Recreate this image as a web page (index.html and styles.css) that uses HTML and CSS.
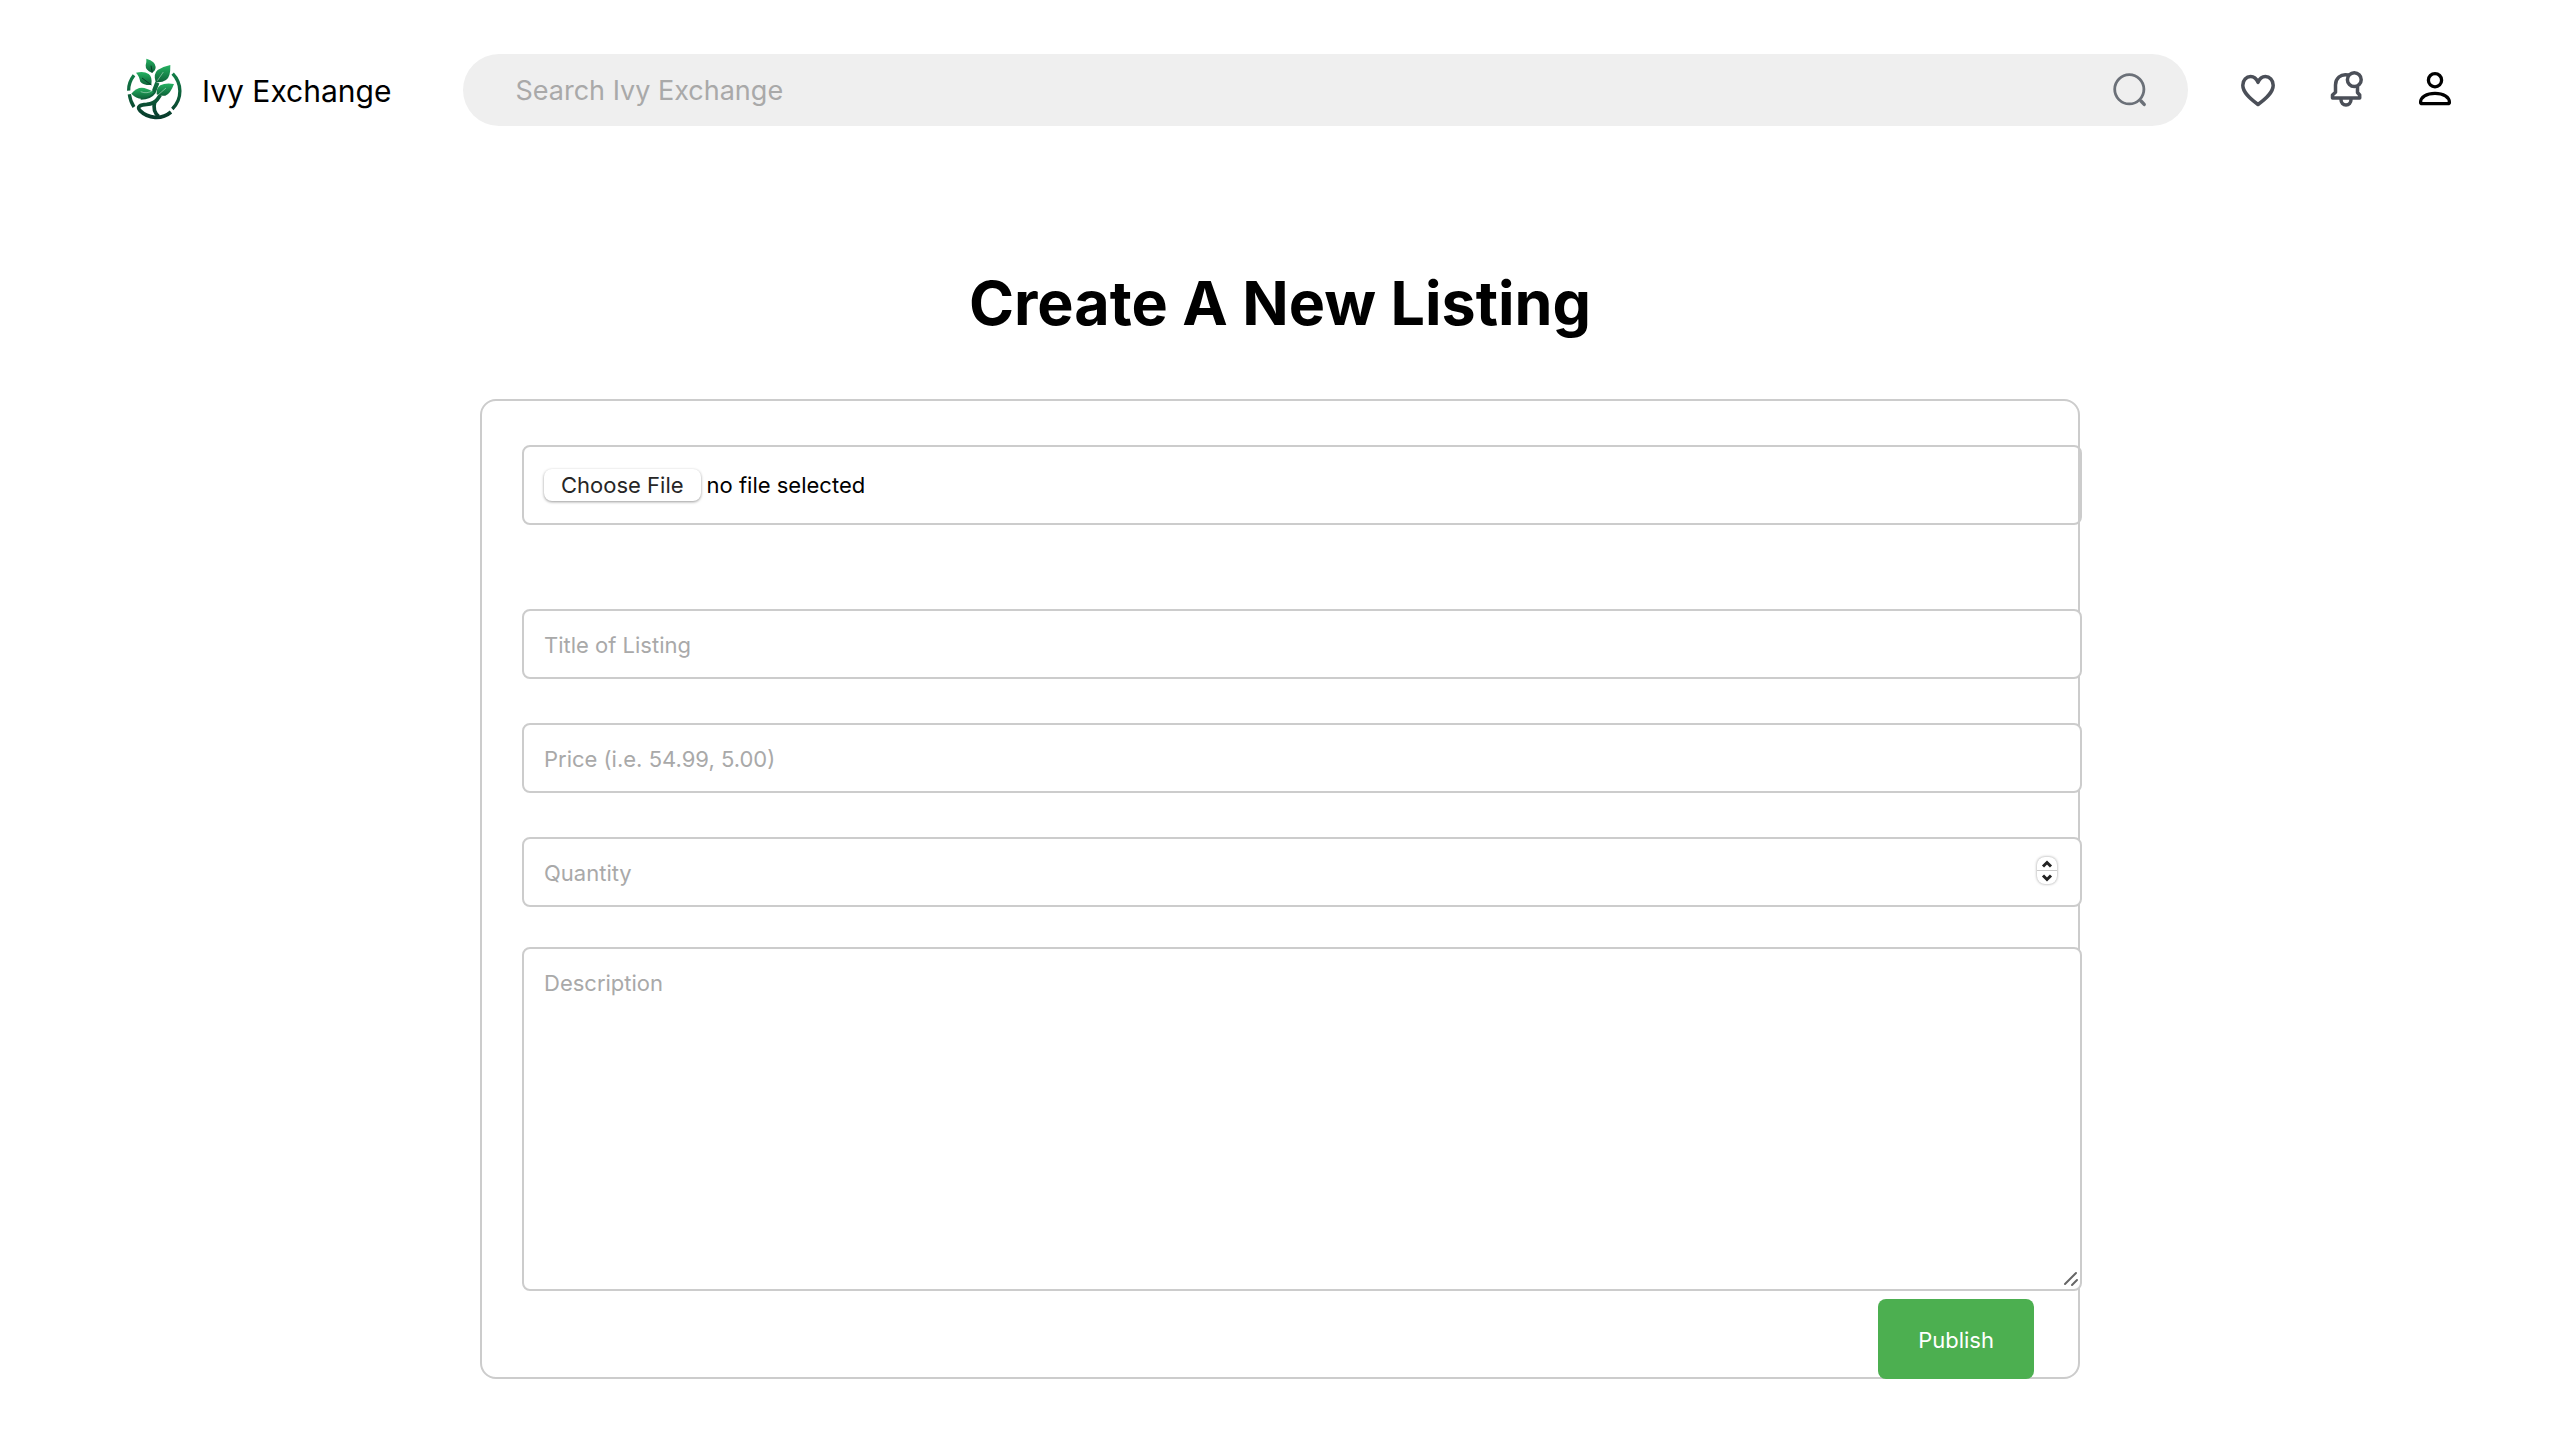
FILE: index.html
```html
<!DOCTYPE html>
<html lang="en">
<head>
  <meta charset="utf-8">
  <meta name="viewport" content="width=device-width, initial-scale=1">
  <title>Create A New Listing - Ivy Exchange</title>
  <link rel="stylesheet" href="styles.css">
</head>
<body>
  <header class="topbar">
    <a class="brand" href="#">
      <svg class="brand-logo" viewBox="0 0 210 225" aria-hidden="true">
        <defs>
          <linearGradient id="leaf" x1="0" y1="0" x2="0" y2="1">
            <stop offset="0" stop-color="#25b362"/>
            <stop offset="1" stop-color="#0d6238"/>
          </linearGradient>
          <linearGradient id="ring" gradientUnits="userSpaceOnUse" x1="0" y1="60" x2="0" y2="205">
            <stop offset="0" stop-color="#128048"/>
            <stop offset="1" stop-color="#08372a"/>
          </linearGradient>
        </defs>
        <g fill="none" stroke="url(#ring)" stroke-width="10">
          <path d="M42 70Q25 92 26 116"/>
          <path d="M28 127Q31 149 42 165"/>
          <path d="M158 65C186 94 188 140 157 171"/>
          <path d="M153 180C125 204 84 200 60 176C50 164 60 158 80 157Q103 155 112 142L121 129" stroke-width="11"/>
          <path d="M104 150Q97 178 116 193" stroke-width="11"/>
          <path d="M62 137Q90 136 101 120L112 92" stroke-width="13"/>
        </g>
        <g fill="url(#leaf)">
          <path d="M79 20Q107 28 107 45Q107 57 95 62Q76 55 77 40Q80 30 79 20Z"/>
          <path d="M48 62Q72 56 86 66Q98 75 94 99Q70 100 61 89Q57 71 48 62Z"/>
          <path d="M151 39Q152 76 138 84Q124 93 107 90Q99 66 113 54Q129 43 151 39Z"/>
          <path d="M34 125Q53 103 73 108Q88 112 102 120Q88 136 70 140Q51 143 34 125Z"/>
          <path d="M162 96Q151 126 136 131Q121 133 110 127Q108 109 121 100Q136 92 162 96Z"/>
        </g>
        <path d="M62 119Q82 127 98 115M138 108L114 129M130 60L112 86" fill="none" stroke="#d8efe0" stroke-width="1.500"/>
        <path d="M93 41L97 62M66 78L94 99" fill="none" stroke="#083c29" stroke-width="3"/>
      </svg>
      <span>Ivy Exchange</span>
    </a>

    <form class="search" role="search">
      <input class="search-input" type="search" placeholder="Search Ivy Exchange" aria-label="Search Ivy Exchange">
      <button class="icon-button" type="submit" aria-label="Search">
        <svg class="icon" viewBox="0 0 40 40" fill="none" stroke="#6b7078" stroke-width="2.800">
          <circle cx="17.300" cy="19.300" r="14.600"/>
          <path d="M29 31l3.200 3.400" stroke-width="3.400" stroke-linecap="round"/>
        </svg>
      </button>
    </form>

    <nav class="actions" aria-label="Account">
      <a class="action" href="#" aria-label="Favorites">
        <svg class="icon" viewBox="1 0 40 40" fill="none" stroke="#4b4f58" stroke-width="3.500" stroke-linejoin="round">
          <path d="M20 34.500C12 28.500 4.800 22.500 4.800 15.200C4.800 10 8.400 6.600 12.600 6.600C16 6.600 18.600 9 20 12.400C21.400 9 24 6.600 27.400 6.600C31.600 6.600 35.200 10 35.200 15.200C35.200 22.500 28 28.500 20 34.500Z"/>
        </svg>
      </a>
      <a class="action" href="#" aria-label="Notifications">
        <svg class="icon" viewBox="0 0 40 40" fill="none" stroke="#4b4f58" stroke-width="3.500" stroke-linejoin="round" stroke-linecap="round">
          <path d="M21 5C13.500 3.500 8.500 8.500 8.500 15V22.300L5.500 25V28H32.700V25L30.500 22.500V17"/>
          <circle cx="27.300" cy="9.700" r="6.900"/>
          <path d="M14 29.500C14 33 16.200 35 19 35S24 33 24 29.500"/>
        </svg>
      </a>
      <a class="action" href="#" aria-label="Profile">
        <svg class="icon" viewBox="0 0 40 40" fill="none" stroke="#000" stroke-width="3.300" stroke-linejoin="round">
          <circle cx="20" cy="10.200" r="6.600"/>
          <path d="M7.200 33.700C6.200 33.700 5.600 33 5.600 32.200C5.600 27 11.500 23.300 20 23.300S34.400 27 34.400 32.200C34.400 33 33.800 33.700 32.800 33.700Z"/>
        </svg>
      </a>
    </nav>
  </header>

  <main class="page">
    <h1 class="page-title">Create A New Listing</h1>

    <form class="listing-form">
      <div class="field file-field">
        <input class="visually-hidden" type="file" id="listing-photo">
        <label class="file-button" for="listing-photo">Choose File</label>
        <span class="file-name">no file selected</span>
      </div>

      <input class="field" type="text" placeholder="Title of Listing" aria-label="Title of Listing">
      <input class="field" type="text" placeholder="Price (i.e. 54.99, 5.00)" aria-label="Price">

      <div class="control">
        <input class="field" type="number" placeholder="Quantity" aria-label="Quantity">
        <div class="stepper">
          <button class="step" type="button" aria-label="Increase quantity">
            <svg viewBox="0 0 20 13" fill="none" stroke="#222" stroke-width="3"><path d="M6 9.500L10 5.500L14 9.500"/></svg>
          </button>
          <button class="step" type="button" aria-label="Decrease quantity">
            <svg viewBox="0 0 20 13" fill="none" stroke="#222" stroke-width="3"><path d="M6 4.500L10 8.500L14 4.500"/></svg>
          </button>
        </div>
      </div>

      <div class="control">
        <textarea class="field description" placeholder="Description" aria-label="Description"></textarea>
        <svg class="grip" viewBox="0 0 16 16" fill="none" stroke="#666" stroke-width="2" stroke-linecap="round" aria-hidden="true">
          <path d="M2 13L13 2M9 14L14 9"/>
        </svg>
      </div>

      <button class="publish" type="submit">Publish</button>
    </form>
  </main>
</body>
</html>
```
FILE: styles.css
```css
body {
  margin: 0;
  background: #fff;
  color: #000;
  font-family: Inter, "Liberation Sans", sans-serif;
}

input,
textarea,
button {
  font-family: inherit;
}

.topbar {
  display: flex;
  align-items: center;
  padding: 52px 105px 0 120px;
}

.brand {
  display: flex;
  align-items: center;
  gap: 12px;
  margin-right: 72px;
  color: #000;
  font-size: 30px;
  line-height: 40px;
  white-space: nowrap;
  text-decoration: none;
}

.brand span {
  padding-top: 2px;
}

.brand-logo {
  width: 70px;
  height: 75px;
}

.search {
  display: flex;
  flex: 1;
  align-items: center;
  height: 72px;
  padding: 0 36px 0 52px;
  border-radius: 36px;
  background: #efefef;
}

.search-input {
  flex: 1;
  min-width: 0;
  padding: 2px 0 0;
  border: 0;
  outline: 0;
  background: none;
  font-size: 27px;
}

::placeholder {
  color: #a9a9a9;
  opacity: 1;
}

.icon-button {
  padding: 0;
  border: 0;
  background: none;
}

.icon {
  display: block;
  width: 40px;
  height: 40px;
}

.actions {
  display: flex;
  gap: 48px;
  margin-left: 51px;
}

.page {
  padding: 0 40px 60px;
}

.page-title {
  margin: 136px 0 56px;
  font-size: 61px;
  line-height: 80px;
  font-weight: 700;
  text-align: center;
}

.listing-form {
  display: flex;
  flex-direction: column;
  box-sizing: border-box;
  max-width: 1600px;
  margin: 0 auto;
  padding: 44px 40px 0;
  border: 2px solid #ccc;
  border-radius: 16px;
}

/* Full-width content box: padding and border extend past the form's right edge */
.field {
  display: block;
  box-sizing: content-box;
  width: 100%;
  height: 26px;
  margin: 0 0 44px;
  padding: 21px 20px 19px;
  border: 2px solid #ccc;
  border-radius: 8px;
  outline: 0;
  background: #fff;
  font-size: 22px;
  line-height: 26px;
}

.file-field {
  display: flex;
  align-items: center;
  gap: 6px;
  height: 36px;
  margin-bottom: 84px;
  padding: 20px;
  background: none;
}

.file-button {
  padding: 3px 17px;
  border-radius: 8px;
  background: #fff;
  box-shadow: 0 1px 3px rgba(0, 0, 0, 0.4);
  color: #262626;
}

.visually-hidden {
  position: absolute;
  width: 1px;
  height: 1px;
  opacity: 0;
}

.control {
  position: relative;
}

.control .field {
  margin-bottom: 40px;
}

.field[type="number"] {
  appearance: textfield;
}

.stepper {
  position: absolute;
  top: 20px;
  right: -19px;
  width: 20px;
  border-radius: 8px;
  background: #fff;
  box-shadow: 0 0 3px rgba(0, 0, 0, 0.4);
}

.step {
  display: block;
  box-sizing: content-box;
  width: 20px;
  height: 13px;
  padding: 0;
  border: 0;
  background: none;
}

.step:first-child {
  border-bottom: 1px solid #ccc;
}

.step svg {
  display: block;
}

.control .description {
  height: 300px;
  margin-bottom: 8px;
  resize: none;
}

.grip {
  position: absolute;
  right: -41px;
  bottom: 12px;
  width: 16px;
  height: 16px;
  pointer-events: none;
}

.publish {
  align-self: flex-end;
  height: 80px;
  margin: 0 4px -2px 0;
  padding: 1px 40px 0;
  border: 0;
  border-radius: 8px;
  background: #4caf50;
  color: #fff;
  font-size: 22px;
}
```
